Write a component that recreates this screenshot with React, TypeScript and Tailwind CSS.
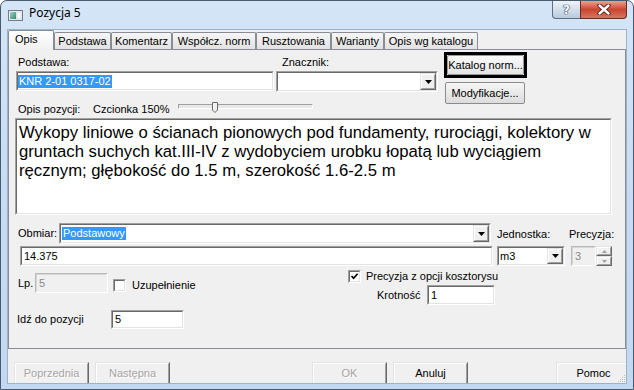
import React from "react";

type Kids = { children?: React.ReactNode };

function Sunken({
  className = "",
  innerClass = "items-center",
  disabled = false,
  children,
}: Kids & { className?: string; innerClass?: string; disabled?: boolean }) {
  const outer = disabled
    ? "border border-t-[#b9b9b9] border-l-[#b9b9b9] border-r-white border-b-white"
    : "border border-t-[#a0a0a0] border-l-[#a0a0a0] border-r-white border-b-white";
  const inner = disabled
    ? "border border-t-[#d6d6d6] border-l-[#d6d6d6] border-r-[#f0f0f0] border-b-[#f0f0f0] bg-[#f0f0f0] text-[#8a8a8a]"
    : "border border-t-[#696969] border-l-[#696969] border-r-[#e3e3e3] border-b-[#e3e3e3] bg-white";
  return (
    <div className={`flex shrink-0 ${outer} ${className}`}>
      <div className={`flex min-w-0 flex-1 overflow-hidden ${inner} ${innerClass}`}>{children}</div>
    </div>
  );
}

function Raised({ className = "", children }: Kids & { className?: string }) {
  return (
    <div
      className={`flex shrink-0 border border-t-[#e3e3e3] border-l-[#e3e3e3] border-r-[#696969] border-b-[#696969] ${className}`}
    >
      <div className="flex min-w-0 flex-1 items-center justify-center border border-t-white border-l-white border-r-[#a0a0a0] border-b-[#a0a0a0] bg-[#f0f0f0]">
        {children}
      </div>
    </div>
  );
}

function DropBtn() {
  return (
    <Raised className="w-[16px] self-stretch">
      <svg width="7" height="4" viewBox="0 0 7 4">
        <path d="M0 0h7L3.5 4z" fill="#000" />
      </svg>
    </Raised>
  );
}

function Combo({ className = "", children }: Kids & { className?: string }) {
  return (
    <Sunken className={className} innerClass="items-stretch">
      <div className="flex min-w-0 flex-1 items-center">{children}</div>
      <DropBtn />
    </Sunken>
  );
}

function Check({ checked = false }: { checked?: boolean }) {
  return (
    <Sunken className="h-[13px] w-[13px]" innerClass="items-center justify-center">
      {checked && (
        <svg width="9" height="9" viewBox="0 0 9 9">
          <path d="M1.5 4 L3.6 6.2 L7.6 1.8" stroke="#000" strokeWidth="1.7" fill="none" />
        </svg>
      )}
    </Sunken>
  );
}

function WinButton({
  className = "",
  disabled = false,
  children,
}: Kids & { className?: string; disabled?: boolean }) {
  return (
    <Raised className={className}>
      <span className={disabled ? "text-[#a3a3a3] [text-shadow:1px_1px_0_#ffffff]" : "text-black"}>
        {children}
      </span>
    </Raised>
  );
}

function AppIcon() {
  return (
    <svg width="15" height="11" viewBox="0 0 15 11">
      <defs>
        <linearGradient id="ig" x1="0" y1="0" x2="1" y2="1">
          <stop offset="0" stopColor="#9fd4c4" />
          <stop offset="1" stopColor="#2f8a6f" />
        </linearGradient>
      </defs>
      <rect x="0.5" y="0.5" width="14" height="10" fill="#e9edf1" stroke="#747d87" />
      <rect x="2" y="2" width="6" height="7" fill="url(#ig)" />
      <rect x="9" y="2" width="4" height="7" fill="#fbfcfd" stroke="#c5ccd3" strokeWidth="0.6" />
    </svg>
  );
}

const tabs: { label: string; w: string }[] = [
  { label: "Podstawa", w: "w-[57px]" },
  { label: "Komentarz", w: "w-[61px]" },
  { label: "Współcz. norm", w: "w-[84px]" },
  { label: "Rusztowania", w: "w-[75px]" },
  { label: "Warianty", w: "w-[53px]" },
  { label: "Opis wg katalogu", w: "w-[94px]" },
];

export default function App() {
  return (
    <div className="h-[390px] w-[634px] bg-white font-['Liberation_Sans',Arial,sans-serif] text-[11px] leading-[13px] text-black">
      <div className="flex h-[390px] w-[634px] flex-col overflow-hidden rounded-t-[7px] border border-[#4a5a6e] bg-linear-to-b from-[#d4e5f7] via-[#c7dcf2] to-[#c3d9f1]">
        {/* Title bar */}
        <div className="flex h-[28px] shrink-0 items-start">
          <div className="ml-[7px] mt-[9px] flex">
            <AppIcon />
          </div>
          <div className="ml-[6px] mt-[4px] font-['Noto_Sans',sans-serif] text-[12px] leading-[16px] text-black">
            Pozycja 5
          </div>
          <div className="ml-auto mr-[6px] flex">
            <div className="flex h-[18px] w-[28px] items-center justify-center rounded-bl-[4px] border border-t-0 border-r-0 border-[#5f6f83] bg-linear-to-b from-[#eef3f9] via-[#d3dfec] to-[#b9cadc]">
              <span className="font-['DejaVu_Sans',sans-serif] text-[12px] font-bold leading-[14px] text-white [text-shadow:0_0_1px_#2a3646,0_0_1px_#2a3646,0_0_1px_#2a3646]">
                ?
              </span>
            </div>
            <div className="flex h-[18px] w-[47px] items-center justify-center rounded-br-[4px] border border-t-0 border-[#6b2a22] bg-linear-to-b from-[#e9a192] via-[#c8452f] to-[#d9735f]">
              <svg width="14" height="11" viewBox="0 0 14 11">
                <path d="M2.5 1.5 L11.5 9.5 M11.5 1.5 L2.5 9.5" stroke="#4a1c16" strokeWidth="4.2" strokeLinecap="round" />
                <path d="M2.5 1.5 L11.5 9.5 M11.5 1.5 L2.5 9.5" stroke="#ffffff" strokeWidth="2.4" strokeLinecap="round" />
              </svg>
            </div>
          </div>
        </div>

        {/* Client area */}
        <div className="relative mx-[6px] flex h-[355px] shrink-0 flex-col overflow-hidden border border-[#9db2ca] bg-[#f0f0f0]">
          {/* Tabs */}
          <div className="relative z-10 flex h-[19px] shrink-0 items-end">
            <div className="-mb-px flex h-[20px] w-[46px] shrink-0 rounded-t-[2px] border border-b-0 border-[#898c95] bg-linear-to-b from-white to-[#f0f0f0] pl-[6px] pt-[2px]">
              Opis
            </div>
            {tabs.map((t) => (
              <div
                key={t.label}
                className={`flex h-[17px] shrink-0 items-start justify-center whitespace-nowrap rounded-t-[2px] border border-b-0 border-[#898c95] bg-linear-to-b from-[#f6f6f6] to-[#e2e2e2] pt-[2px] ${t.w}`}
              >
                {t.label}
              </div>
            ))}
          </div>

          {/* Panel */}
          <div className="flex h-[300px] shrink-0 flex-col border border-[#898c95] bg-[#f0f0f0]">
            {/* Section A */}
            <div className="flex h-[68px] shrink-0">
              <div className="ml-[7px] flex flex-col">
                <div className="mt-[6px] flex">
                  <div className="flex w-[258px] flex-col">
                    <div className="h-[13px] pl-[2px]">Podstawa:</div>
                    <Sunken className="mt-[2px] h-[20px] w-[258px]">
                      <span className="bg-[#3399ff] px-px text-white">KNR 2-01 0317-02</span>
                    </Sunken>
                  </div>
                  <div className="ml-[2px] flex w-[162px] flex-col">
                    <div className="h-[13px] pl-[6px]">Znacznik:</div>
                    <Combo className="mt-[2px] h-[21px] w-[162px]" />
                  </div>
                </div>
                <div className="mt-[11px] flex h-[13px] items-start">
                  <div className="w-[77px] pl-[2px]">Opis pozycji:</div>
                  <div className="w-[85px]">Czcionka 150%</div>
                  <div className="relative -mt-px h-[11px] w-[135px]">
                    <div className="mt-[2px] h-[5px] w-[135px] border border-t-[#a0a0a0] border-l-[#a0a0a0] border-r-white border-b-white bg-[#e8e8e8]" />
                    <svg className="absolute left-[34px] top-0" width="6" height="11" viewBox="0 0 6 11">
                      <path d="M0.5 0.5 H5.5 V8 L3 10.5 L0.5 8 Z" fill="#f0f0f0" stroke="#696969" />
                      <path d="M1.5 1.5 H4.5 M1.5 1.5 V7.5" stroke="#ffffff" />
                    </svg>
                  </div>
                </div>
              </div>
              <div className="ml-[6px] mt-[2px] flex flex-col">
                <div className="flex h-[26px] w-[83px] border-[3px] border-black">
                  <div className="flex flex-1 items-center justify-center rounded-[2px] border border-[#9a9a9a] bg-linear-to-b from-[#fbfbfb] to-[#e4e4e4]">
                    Katalog norm...
                  </div>
                </div>
                <div className="ml-px mt-[4px] flex h-[22px] w-[80px] items-center justify-center rounded-[2px] border border-[#8b8b8b] bg-linear-to-b from-[#f6f6f6] to-[#dcdcdc]">
                  Modyfikacje...
                </div>
              </div>
            </div>

            {/* Section B: description */}
            <Sunken className="ml-[6px] h-[97px] w-[597px]" innerClass="flex-col items-start">
              <div className="whitespace-nowrap pl-[2px] pt-[3px] text-[16.7px] leading-[19px]">
                <div>Wykopy liniowe o ścianach pionowych pod fundamenty, rurociągi, kolektory w</div>
                <div>gruntach suchych kat.III-IV z wydobyciem urobku łopatą lub wyciągiem</div>
                <div>ręcznym; głębokość do 1.5 m, szerokość 1.6-2.5 m</div>
              </div>
            </Sunken>

            {/* Section C */}
            <div className="mt-[8px] flex h-[21px] shrink-0 items-center">
              <div className="ml-[9px] w-[41px]">Obmiar:</div>
              <Combo className="h-[21px] w-[432px]">
                <span className="ml-px bg-[#3399ff] px-px text-white">Podstawowy</span>
              </Combo>
              <div className="ml-[6px] mt-[2px] w-[72px]">Jednostka:</div>
              <div className="mt-[2px]">Precyzja:</div>
            </div>
            <div className="mt-[2px] flex h-[20px] shrink-0 items-stretch">
              <Sunken className="ml-[11px] h-[20px] w-[473px]">
                <span className="pl-[2px]">14.375</span>
              </Sunken>
              <Combo className="ml-[4px] h-[20px] w-[68px]">
                <span className="pl-px">m3</span>
              </Combo>
              <div className="ml-[6px] flex">
                <Sunken className="h-[20px] w-[25px]" disabled>
                  <span className="pl-[2px]">3</span>
                </Sunken>
                <div className="flex flex-col">
                  <Raised className="h-[10px] w-[16px]">
                    <svg width="5" height="3" viewBox="0 0 5 3">
                      <path d="M0 3h5L2.5 0z" fill="#a0a0a0" />
                    </svg>
                  </Raised>
                  <Raised className="h-[10px] w-[16px]">
                    <svg width="5" height="3" viewBox="0 0 5 3">
                      <path d="M0 0h5L2.5 3z" fill="#a0a0a0" />
                    </svg>
                  </Raised>
                </div>
              </div>
            </div>

            {/* Section D */}
            <div className="flex">
              <div className="flex w-[339px] flex-col">
                <div className="mt-[7px] flex h-[20px] items-end">
                  <div className="ml-[9px] w-[17px] self-center">Lp.</div>
                  <Sunken className="h-[20px] w-[73px]" disabled>
                    <span className="pl-[2px]">5</span>
                  </Sunken>
                  <div className="mb-px ml-[5px] flex">
                    <Check />
                  </div>
                  <div className="mb-px ml-[6px]">Uzupełnienie</div>
                </div>
                <div className="mt-[17px] flex h-[19px] items-center">
                  <div className="ml-[8px] w-[94px]">Idź do pozycji</div>
                  <Sunken className="h-[19px] w-[73px]">
                    <span className="pl-[2px]">5</span>
                  </Sunken>
                </div>
              </div>
              <div className="flex flex-col">
                <div className="mt-[4px] flex h-[13px] items-center">
                  <Check checked />
                  <div className="ml-[5px]">Precyzja z opcji kosztorysu</div>
                </div>
                <div className="mt-[2px] flex h-[20px] items-center">
                  <div className="ml-[29px] w-[50px]">Krotność</div>
                  <Sunken className="h-[20px] w-[68px]">
                    <span className="pl-[2px]">1</span>
                  </Sunken>
                </div>
              </div>
            </div>
          </div>

          {/* Bottom buttons */}
          <div className="flex shrink-0 items-start pl-[6px] pt-[13px]">
            <WinButton className="h-[23px] w-[75px]" disabled>
              Poprzednia
            </WinButton>
            <WinButton className="ml-[6px] h-[23px] w-[75px]" disabled>
              Następna
            </WinButton>
            <WinButton className="ml-[142px] h-[23px] w-[75px]" disabled>
              OK
            </WinButton>
            <WinButton className="ml-[6px] h-[23px] w-[75px]">Anuluj</WinButton>
            <WinButton className="ml-[88px] h-[23px] w-[75px]">Pomoc</WinButton>
          </div>

          {/* size grip */}
          <svg className="absolute bottom-0 right-0" width="10" height="10" viewBox="0 0 10 10">
            <g fill="#b8b8b8">
              <rect x="8" y="2" width="1" height="1" />
              <rect x="6" y="4" width="1" height="1" />
              <rect x="8" y="4" width="1" height="1" />
              <rect x="4" y="6" width="1" height="1" />
              <rect x="6" y="6" width="1" height="1" />
              <rect x="8" y="6" width="1" height="1" />
              <rect x="2" y="8" width="1" height="1" />
              <rect x="4" y="8" width="1" height="1" />
              <rect x="6" y="8" width="1" height="1" />
              <rect x="8" y="8" width="1" height="1" />
            </g>
          </svg>
        </div>
      </div>
    </div>
  );
}
